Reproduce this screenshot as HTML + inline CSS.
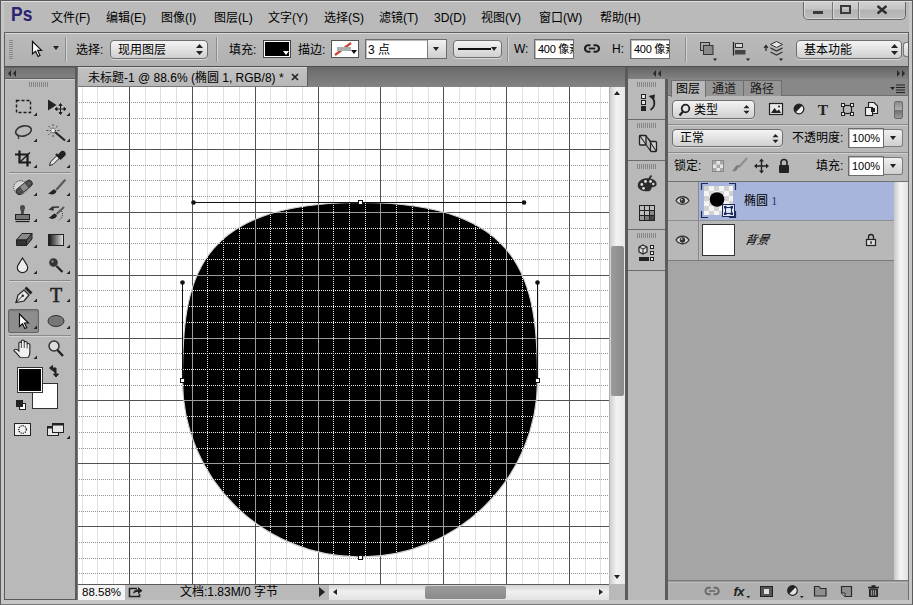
<!DOCTYPE html>
<html lang="zh-CN">
<head>
<meta charset="utf-8">
<title>Photoshop</title>
<style>
*{box-sizing:border-box}
html,body{margin:0;padding:0}
body{width:913px;height:605px;position:relative;overflow:hidden;background:#c4c4c4;font-family:"Liberation Sans","Noto Sans CJK SC",sans-serif;font-size:12px;color:#000;line-height:1}
.a{position:absolute}
.t{position:absolute;white-space:nowrap;line-height:14px;height:14px}
.sep{position:absolute;width:1px;background:#8d8d8d;box-shadow:1px 0 0 #d2d2d2}
.dd{position:absolute;border:1px solid #6f6f6f;border-radius:4px;background:linear-gradient(#f4f4f4,#d0d0d0);box-shadow:0 1px 0 #d8d8d8}
.inp{position:absolute;border:1px solid #6c6c6c;background:#fff;box-shadow:inset 1px 1px 0 #bdbdbd;overflow:hidden}
.hsep{position:absolute;height:1px;background:#8a8a8a;box-shadow:0 1px 0 #d0d0d0}
</style>
</head>
<body>
<!-- window frame -->
<div class="a" id="frame" style="left:0;top:0;width:913px;height:605px;background:#c6c6c6;border:1px solid #5a5a5a;border-bottom-color:#777"></div>
<div class="a" style="left:1px;top:1px;width:911px;height:1px;background:#e4e4e4"></div>

<!-- MENU BAR -->
<div class="a" id="menubar" style="left:4px;top:2px;width:905px;height:30px;background:#bababa"></div>
<div class="t" style="left:11px;top:2px;font-size:21px;font-weight:bold;color:#2d2272;line-height:24px;height:24px;transform:scaleX(0.83);transform-origin:0 0">Ps</div>
<div class="t" style="left:51px;top:11px">文件(F)</div>
<div class="t" style="left:106px;top:11px">编辑(E)</div>
<div class="t" style="left:161px;top:11px">图像(I)</div>
<div class="t" style="left:214px;top:11px">图层(L)</div>
<div class="t" style="left:268px;top:11px">文字(Y)</div>
<div class="t" style="left:324px;top:11px">选择(S)</div>
<div class="t" style="left:379px;top:11px">滤镜(T)</div>
<div class="t" style="left:434px;top:11px">3D(D)</div>
<div class="t" style="left:481px;top:11px">视图(V)</div>
<div class="t" style="left:539px;top:11px">窗口(W)</div>
<div class="t" style="left:600px;top:11px">帮助(H)</div>
<!-- window buttons -->
<div class="a" id="winbtns" style="left:803px;top:0;width:103px;height:20px;border:1px solid #666;border-top:none;border-radius:0 0 5px 5px;background:linear-gradient(#d4d4d4,#c6c6c6 45%,#b4b4b4 55%,#bcbcbc);box-shadow:inset 0 -1px 0 #d8d8d8,inset 1px 0 0 #dcdcdc">
  <div class="a" style="left:28px;top:0;width:1px;height:19px;background:#777;box-shadow:1px 0 0 #d8d8d8"></div>
  <div class="a" style="left:54px;top:0;width:1px;height:19px;background:#777;box-shadow:1px 0 0 #d8d8d8"></div>
  <div class="a" style="left:9px;top:11px;width:10px;height:3px;background:#3a3a3a"></div>
  <div class="a" style="left:36px;top:5px;width:11px;height:9px;border:2px solid #3a3a3a"></div>
  <svg class="a" style="left:72px;top:4px" width="12" height="11" viewBox="0 0 12 11"><path d="M1.5 2 L10.5 9.500 M10.5 2 L1.5 9.500" stroke="#2e2e2e" stroke-width="2.3"/></svg>
</div>

<div class="a" style="left:0;top:0;width:913px;height:1px;background:#5a5a5a"></div>
<div class="a" style="left:1px;top:1px;width:911px;height:1px;background:#e0e0e0"></div>
<!-- OPTIONS BAR -->
<div class="a" id="optbar" style="left:4px;top:32px;width:905px;height:35px;background:linear-gradient(#bbbbbb,#b0b0b0);border:1px solid #5e5e5e;border-bottom-color:#4f4f4f;box-shadow:inset 0 1px 0 #dadada"></div>


<!-- options content -->
<div class="a" style="left:9px;top:40px;width:4px;height:19px;background:repeating-linear-gradient(#8a8a8a 0 1px,transparent 1px 2px)"></div>
<svg class="a" style="left:31px;top:40px" width="12" height="18" viewBox="0 0 12 18"><path d="M1.5 1.5 L1.5 14 L4.6 11.2 L7 16.4 L9 15.5 L6.7 10.4 L10.6 10.4 Z" fill="#fff" stroke="#111" stroke-width="1.2" stroke-linejoin="miter"/></svg>
<div class="a" style="left:53px;top:46px;width:0;height:0;border-left:3.5px solid transparent;border-right:3.5px solid transparent;border-top:4px solid #222"></div>
<div class="sep" style="left:65px;top:37px;height:25px"></div>
<div class="t" style="left:76px;top:43px;font-size:12px">选择:</div>
<div class="dd" style="left:110px;top:40px;width:98px;height:19px"></div>
<div class="t" style="left:118px;top:43px;font-size:12px">现用图层</div>
<svg class="a" style="left:196px;top:44px" width="7" height="11" viewBox="0 0 7 11"><path d="M0 4 L3.5 0 L7 4 Z M0 7 L3.5 11 L7 7 Z" fill="#222"/></svg>
<div class="sep" style="left:216px;top:37px;height:25px"></div>
<div class="t" style="left:229px;top:43px;font-size:12px">填充:</div>
<div class="a" style="left:263px;top:40px;width:28px;height:18px;background:#000;border:1px solid #444;box-shadow:inset 0 0 0 1px #fff"></div>
<div class="a" style="left:283px;top:51px;width:0;height:0;border-left:3px solid transparent;border-right:3px solid transparent;border-top:4px solid #fff"></div>
<div class="t" style="left:298px;top:43px;font-size:12px">描边:</div>
<div class="a" style="left:331px;top:40px;width:28px;height:18px;background:#fff;border:1px solid #555"></div>
<svg class="a" style="left:332px;top:41px" width="26" height="16" viewBox="0 0 26 16"><path d="M3 14 L19 2" stroke="#d0453a" stroke-width="2.2"/><rect x="5" y="6" width="14" height="4" fill="#a9b0ad"/><path d="M19 9 L25 9 L22 13 Z" fill="#111"/></svg>
<div class="inp" style="left:365px;top:39px;width:82px;height:20px"></div>
<div class="t" style="left:368px;top:43px;font-size:12px">3 点</div>
<div class="a" style="left:427px;top:40px;width:19px;height:18px;background:linear-gradient(#f2f2f2,#cfcfcf);border-left:1px solid #7a7a7a"></div>
<div class="a" style="left:433px;top:47px;width:0;height:0;border-left:3.5px solid transparent;border-right:3.5px solid transparent;border-top:4px solid #222"></div>
<div class="dd" style="left:453px;top:40px;width:49px;height:18px"></div>
<div class="a" style="left:458px;top:48px;width:33px;height:2px;background:#111"></div>
<div class="a" style="left:491px;top:47px;width:0;height:0;border-left:3px solid transparent;border-right:3px solid transparent;border-top:4px solid #222"></div>
<div class="sep" style="left:507px;top:37px;height:25px"></div>
<div class="t" style="left:514px;top:42px">W:</div>
<div class="inp" style="left:534px;top:39px;width:40px;height:20px"><span class="t" style="left:3px;top:2px;font-size:11px;letter-spacing:-0.3px">400 像素</span></div>
<svg class="a" style="left:584px;top:43px" width="16" height="11" viewBox="0 0 16 11"><path d="M6.500 2.200 H4.300 a3.300 3.300 0 0 0 0 6.600 H6.500 M9.500 2.200 H11.700 a3.300 3.300 0 0 1 0 6.600 H9.500" fill="none" stroke="#1e1e1e" stroke-width="2.100"/><path d="M4.800 5.500 H11.200" stroke="#1e1e1e" stroke-width="1.800"/></svg>
<div class="t" style="left:612px;top:42px">H:</div>
<div class="inp" style="left:630px;top:39px;width:40px;height:20px"><span class="t" style="left:3px;top:2px;font-size:11px;letter-spacing:-0.3px">400 像素</span></div>
<div class="sep" style="left:685px;top:37px;height:25px"></div>
<!-- path ops -->
<svg class="a" style="left:699px;top:40px" width="20" height="22" viewBox="0 0 20 22"><rect x="1.500" y="2.500" width="9" height="8" fill="#a6a6a6" stroke="#333"/><rect x="4.500" y="5.500" width="9.500" height="9" fill="#8a8a8a" stroke="#333"/><path d="M14 18.500 L18 18.500 L16 21 Z" fill="#222"/></svg>
<svg class="a" style="left:731px;top:40px" width="22" height="22" viewBox="0 0 22 22"><path d="M2.500 2 L2.500 15.500" stroke="#222" stroke-width="1.300"/><rect x="4.500" y="3.500" width="7" height="4" fill="#d6d6d6" stroke="#333"/><rect x="4" y="10" width="10.500" height="4.500" fill="#444"/><path d="M15 18.500 L19 18.500 L17 21 Z" fill="#222"/></svg>
<svg class="a" style="left:760px;top:39px" width="26" height="24" viewBox="0 0 26 24"><path d="M6 6.500 L6 12 M4 9 L6 6.500 L8 9" stroke="#222" stroke-width="1.200" fill="none"/><path d="M16.500 2.500 L22.500 5.500 L16.500 8.500 L10.500 5.500 Z" fill="#e4e4e4" stroke="#333" stroke-width="1"/><path d="M10.500 8.300 L16.500 11.300 L22.500 8.300 L22.500 9.800 L16.500 12.800 L10.500 9.800 Z" fill="#333"/><path d="M10.500 13 L16.500 16 L22.500 13" fill="none" stroke="#333" stroke-width="1.300"/><path d="M19 19.500 L23 19.500 L21 22 Z" fill="#222"/></svg>
<div class="dd" style="left:796px;top:40px;width:106px;height:19px"></div>
<div class="t" style="left:804px;top:43px;font-size:12px">基本功能</div>
<svg class="a" style="left:891px;top:44px" width="7" height="11" viewBox="0 0 7 11"><path d="M0 4 L3.5 0 L7 4 Z M0 7 L3.5 11 L7 7 Z" fill="#222"/></svg>
<div class="a" style="left:903px;top:42px;width:5px;height:15px;background:linear-gradient(#f0f0f0,#d4d4d4);border:1px solid #7a7a7a;border-right:none;border-radius:3px 0 0 3px"></div>

<!-- TAB STRIP / dark band -->
<div class="a" id="tabstrip" style="left:4px;top:67px;width:905px;height:20px;background:linear-gradient(#6a6a6a,#848484)"></div>

<!-- TOOLBOX -->
<div class="a" id="toolbox" style="left:4px;top:67px;width:73px;height:533px;background:#b9b9b9;border:1px solid #5a5a5a;border-right:2px solid #5a5a5a"></div>


<!-- toolbox content -->
<div class="a" style="left:5px;top:67px;width:70px;height:12px;background:linear-gradient(#5e5e5e,#747474 15%,#808080);border-bottom:1px solid #5c5c5c"></div>
<div class="a" style="left:5px;top:79px;width:70px;height:1px;background:#cfcfcf"></div>
<svg class="a" style="left:7px;top:70px" width="10" height="7" viewBox="0 0 10 7"><path d="M4 0 L1 3.500 L4 7 Z M9 0 L6 3.500 L9 7 Z" fill="#2a2a2a"/></svg>
<div class="a" style="left:29px;top:82px;width:20px;height:5px;background:repeating-linear-gradient(90deg,#858585 0 1px,transparent 1px 2px)"></div>
<div class="hsep" style="left:9px;top:172px;width:62px"></div>
<div class="hsep" style="left:9px;top:280px;width:62px"></div>
<div class="hsep" style="left:9px;top:335px;width:62px"></div>
<div class="a" style="left:8px;top:309px;width:31px;height:24px;background:#8e8e8e;border:1px solid #666;border-radius:2px;box-shadow:inset 0 1px 2px #777"></div>
<svg class="a" id="tools" style="left:5px;top:90px" width="70" height="360" viewBox="5 90 70 360">
<!-- marquee -->
<rect x="16.500" y="100.500" width="14" height="12" fill="none" stroke="#1a1a1a" stroke-width="1.400" stroke-dasharray="3 2"/>
<path d="M37 112.5 V116 H33.5 Z" fill="#222"/>
<!-- move -->
<path d="M48 99.500 V110.500 L56.500 105 Z" fill="#222"/>
<path d="M60.500 104.500 V113.500 M56 109 H65 M60.500 103.500 L59 105.500 H62 Z M60.500 114.500 L59 112.500 H62 Z M55 109 L57 107.500 V110.500 Z M66 109 L64 107.500 V110.500 Z" stroke="#222" stroke-width="1" fill="#222"/>
<path d="M70 112.5 V116 H66.5 Z" fill="#222"/>
<!-- lasso -->
<ellipse cx="23.500" cy="131" rx="8" ry="5" transform="rotate(-14 23.500 131)" fill="none" stroke="#333" stroke-width="1.600"/>
<path d="M17.500 134 C16.500 135.500 19.500 136 18.500 139" fill="none" stroke="#333" stroke-width="1.300"/>
<path d="M37 138.5 V142 H33.5 Z" fill="#222"/>
<!-- wand -->
<path d="M55 132 L65 140.500" stroke="#222" stroke-width="2.200"/>
<path d="M53 124 V137 M46.500 130.500 H59.500 M48.500 126 L57.500 135 M57.500 126 L48.500 135" stroke="#444" stroke-width="1" stroke-dasharray="2 1.500 6 1.500"/>
<circle cx="53" cy="130.500" r="1.800" fill="#eee"/>
<path d="M70 138.5 V142 H66.5 Z" fill="#222"/>
<!-- crop -->
<path d="M19.500 150.500 V162.500 H31 M15 154.500 H27.500 V166.500" fill="none" stroke="#1a1a1a" stroke-width="2.200"/>
<path d="M19.500 162.500 L30 152.500" stroke="#1a1a1a" stroke-width="1.300"/>
<path d="M37 164.5 V168 H33.5 Z" fill="#222"/>
<!-- eyedropper -->
<path d="M49.500 165.500 L50.500 162 L57 155.500 L59.500 158 L53 164.500 Z" fill="#e8e8e8" stroke="#222" stroke-width="1"/>
<path d="M56 154 L61 159 M57.500 156.500 L62 152 a2 2 0 0 1 2.500 2.500 L60 159" stroke="#222" stroke-width="2.400" fill="#222"/>
<path d="M70 164.5 V168 H66.5 Z" fill="#222"/>
<!-- healing -->
<circle cx="20.500" cy="187.500" r="6.800" fill="#d6d6d6" stroke="#222" stroke-width="1" stroke-dasharray="1 1.200"/>
<g transform="rotate(-39 24.200 187.400)"><rect x="14.700" y="184.100" width="19" height="6.600" rx="3.300" fill="#4a4a4a" stroke="#222" stroke-width="0.800"/><rect x="21.200" y="184.600" width="6" height="5.600" fill="#8e8e8e"/><path d="M17 187.400 h2.500 M29 187.400 h2.500" stroke="#999" stroke-width="0.800" stroke-dasharray="0.800 0.800"/></g>
<path d="M37 192.5 V196 H33.5 Z" fill="#222"/>
<!-- brush -->
<path d="M64.800 180.300 L56.800 189.300" stroke="#5a5a5a" stroke-width="2.200" stroke-linecap="round"/>
<path d="M47.800 193.300 C50.500 192.800 51.500 190.300 54.300 189.200 L56.500 191.200 C56 193.500 52.500 195.800 47.800 193.300 Z" fill="#222"/>
<path d="M70 192.5 V196 H66.5 Z" fill="#222"/>
<!-- stamp -->
<path d="M20 207.500 a2.500 2.500 0 0 1 5 0 c0 2 -1.300 3 -1.100 7 H21.100 c0.200 -4 -1.100 -5 -1.100 -7 Z" fill="#4a4a4a"/>
<rect x="15.500" y="214.500" width="14" height="5" fill="#777" stroke="#222" stroke-width="1"/>
<path d="M15.500 221.500 H29.500" stroke="#222" stroke-width="1.300"/>
<path d="M37 218.5 V222 H33.5 Z" fill="#222"/>
<!-- history brush -->
<path d="M63.500 207.500 L57.200 213.500" stroke="#5a5a5a" stroke-width="2" stroke-linecap="round"/>
<path d="M48.500 217.800 C51 217.300 52 214.800 54.800 213.600 L57 215.600 C56.500 218 53 220.300 48.500 217.800 Z" fill="#222"/>
<path d="M52 208.300 C54.500 207 57 206.800 59 207.300" fill="none" stroke="#333" stroke-width="1.600"/><path d="M48.300 209.800 L53.300 205.800 L53.800 210.800 Z" fill="#333"/>
<path d="M61.500 211 C63.500 214 62.500 218.500 58.500 220.500" fill="none" stroke="#333" stroke-width="1" stroke-dasharray="1 1.200"/>
<path d="M70 218.5 V222 H66.5 Z" fill="#222"/>
<!-- eraser -->
<path d="M16.500 240 L22 233.500 H32 L26.500 240 Z" fill="#8a8a8a" stroke="#222" stroke-width="1"/>
<path d="M16.500 240 H26.500 V245.500 H16.500 Z" fill="#333" stroke="#222" stroke-width="1"/>
<path d="M26.500 240 L32 233.500 V239 L26.500 245.500 Z" fill="#555" stroke="#222" stroke-width="1"/>
<path d="M37 244.5 V248 H33.5 Z" fill="#222"/>
<!-- gradient -->
<defs><linearGradient id="gr" x1="0" x2="1"><stop offset="0" stop-color="#111"/><stop offset="1" stop-color="#e6e6e6"/></linearGradient></defs>
<rect x="48.500" y="234.500" width="15" height="11" fill="url(#gr)" stroke="#222" stroke-width="1"/>
<path d="M70 244.5 V248 H66.5 Z" fill="#222"/>
<!-- blur drop -->
<path d="M22.500 258 C19.500 263 17.300 265 17.300 267.500 a5.200 5.200 0 0 0 10.400 0 C27.700 265 25.500 263 22.500 258 Z" fill="#ececec" stroke="#222" stroke-width="1.200"/>
<path d="M37 270.5 V274 H33.5 Z" fill="#222"/>
<!-- dodge -->
<circle cx="53.500" cy="262.500" r="4.300" fill="#333"/><path d="M56.500 266 L62.500 272" stroke="#222" stroke-width="2.200"/>
<circle cx="52.500" cy="261.500" r="1.200" fill="#888"/>
<path d="M70 270.5 V274 H66.5 Z" fill="#222"/>
<!-- pen -->
<path d="M16 302.500 L18 295 L24 290 L29 295 L24 301 Z" fill="#e6e6e6" stroke="#222" stroke-width="1.200"/>
<path d="M16 302.500 L22.500 296" stroke="#222" stroke-width="1"/><circle cx="22.800" cy="295.700" r="1.200" fill="#222"/>
<path d="M24.500 288.500 L30.500 294.500 L32.500 292.500 L26.500 286.500 Z" fill="#222"/>
<path d="M37 298.5 V302 H33.5 Z" fill="#222"/>
<!-- T -->
<text x="56" y="301.500" font-family="Liberation Serif,serif" font-size="20" text-anchor="middle" fill="#222" stroke="#222" stroke-width="0.500">T</text>
<path d="M70 298.5 V302 H66.5 Z" fill="#222"/>
<!-- path selection (selected) -->
<path d="M19.500 314 V326.500 L22.500 323.800 L24.800 328.500 L26.700 327.600 L24.500 323 L28.300 323 Z" fill="#fff" stroke="#111" stroke-width="1.200"/>
<path d="M37 325.5 V329 H33.5 Z" fill="#222"/>
<!-- ellipse shape -->
<ellipse cx="56" cy="321" rx="8" ry="5.500" fill="#777" stroke="#333" stroke-width="1"/>
<path d="M70 325.5 V329 H66.5 Z" fill="#222"/>
<!-- hand -->
<g transform="translate(22 349.500) scale(1.25 1.05) translate(-20.500 -349.500)"><path d="M19 357 C17 354 15 351.500 14 350.500 C14.500 348.500 16.500 349 18 351 V343.500 C18 342 20 342 20 343.500 V341.500 C20 340 22.300 340 22.300 341.500 V343 C22.300 341.500 24.600 341.500 24.600 343 V345 C24.600 343.500 26.800 343.500 26.800 345 V352 C26.800 354.500 26 356 25.500 357 Z" fill="#f0f0f0" stroke="#222" stroke-width="0.900"/><path d="M20 343.500 V348 M22.300 343 V348 M24.600 345 V348.500" stroke="#222" stroke-width="0.700"/></g>
<path d="M37 355.5 V359 H33.5 Z" fill="#222"/>
<!-- zoom -->
<circle cx="54" cy="346" r="5" fill="#ddd" stroke="#333" stroke-width="1.500"/><path d="M57.500 350 L63 356" stroke="#222" stroke-width="2.400"/>
<!-- swap arrow -->
<path d="M51 368 H56 V375 M49.500 368 L52.500 365.500 V370.500 Z M56 377 L53.500 374 H58.500 Z" fill="#222" stroke="#222" stroke-width="1"/>
<!-- bg swatch -->
<rect x="32.500" y="383.500" width="25" height="25" fill="#fff" stroke="#333" stroke-width="1"/>
<!-- fg swatch -->
<rect x="18.500" y="368.500" width="23" height="23" fill="#000" stroke="#fff" stroke-width="1"/>
<rect x="17.500" y="367.500" width="25" height="25" fill="none" stroke="#333" stroke-width="1"/>
<!-- default colors -->
<rect x="19.500" y="403.500" width="6" height="6" fill="#fff" stroke="#222" stroke-width="1"/>
<rect x="16.500" y="400.500" width="6" height="6" fill="#222" stroke="#222" stroke-width="1"/>
<!-- quickmask -->
<rect x="14.500" y="423.500" width="16" height="12" fill="#f2f2f2" stroke="#222" stroke-width="1"/>
<circle cx="22.500" cy="429.500" r="3.800" fill="none" stroke="#111" stroke-width="1.200" stroke-dasharray="1.200 1"/>
<!-- screen mode -->
<rect x="47.500" y="426.500" width="11" height="9" fill="#e6e6e6" stroke="#222" stroke-width="1"/><path d="M47 427.500 H59" stroke="#222" stroke-width="2"/>
<rect x="52.500" y="423.500" width="11" height="9" fill="#e6e6e6" stroke="#222" stroke-width="1"/><path d="M52 424.500 H64" stroke="#222" stroke-width="2"/>
<path d="M70 435.5 V439 H66.5 Z" fill="#222"/>
</svg>

<!-- DOCUMENT -->
<div class="a" id="doc" style="left:77px;top:87px;width:549px;height:513px;background:#fff"></div>


<!-- doc tab -->
<div class="a" id="doctab" style="left:78px;top:67px;width:230px;height:20px;background:linear-gradient(#c2c2c2,#b7b7b7);border-right:1px solid #5c5c5c;border-bottom:1px solid #777;box-shadow:inset 0 1px 0 #d4d4d4"></div>
<div class="t" style="left:88px;top:71px;font-size:12px">未标题-1 @ 88.6% (椭圆 1, RGB/8) *</div>
<svg class="a" style="left:291px;top:73px" width="8" height="8" viewBox="0 0 8 8"><path d="M1 1 L7 7 M7 1 L1 7" stroke="#222" stroke-width="1.6"/></svg>
<svg class="a" id="canvas" style="left:77px;top:87px" width="532" height="497" viewBox="77 87 532 497" shape-rendering="crispEdges">
<defs><clipPath id="shp"><path d="M360.500 202.500 C524 202.500 537.500 282 537.500 380 C537.500 478 458 557 360.500 557 C262 557 182.500 478 182.500 380 C182.500 282 193.500 202.500 360.500 202.500 Z"/></clipPath></defs>
<rect x="77" y="87" width="532" height="497" fill="#fff"/>
<path d="M82.5 87V584M97.5 87V584M113.5 87V584M145.5 87V584M160.5 87V584M176.5 87V584M207.5 87V584M223.5 87V584M239.5 87V584M270.5 87V584M286.5 87V584M302.5 87V584M333.5 87V584M349.5 87V584M365.5 87V584M396.5 87V584M412.5 87V584M428.5 87V584M459.5 87V584M475.5 87V584M490.5 87V584M522.5 87V584M538.5 87V584M553.5 87V584M585.5 87V584M600.5 87V584" stroke="#e0e0e0" stroke-width="1" fill="none"/>
<path d="M77 102.5H609M77 118.5H609M77 133.5H609M77 165.5H609M77 180.5H609M77 196.5H609M77 228.5H609M77 243.5H609M77 259.5H609M77 290.5H609M77 306.5H609M77 322.5H609M77 353.5H609M77 369.5H609M77 385.5H609M77 416.5H609M77 432.5H609M77 448.5H609M77 479.5H609M77 495.5H609M77 511.5H609M77 542.5H609M77 558.5H609M77 573.5H609" stroke="#969696" stroke-width="1" stroke-dasharray="1 1" fill="none"/>
<path d="M129.5 87V584M192.5 87V584M255.5 87V584M318.5 87V584M380.5 87V584M443.5 87V584M506.5 87V584M569.5 87V584M77 149.5H609M77 212.5H609M77 275.5H609M77 338.5H609M77 400.5H609M77 463.5H609M77 526.5H609" stroke="#525252" stroke-width="1" fill="none"/>
<g clip-path="url(#shp)">
<rect x="77" y="87" width="532" height="497" fill="#000"/>
<path d="M82.5 87V584M97.5 87V584M113.5 87V584M145.5 87V584M160.5 87V584M176.5 87V584M207.5 87V584M223.5 87V584M239.5 87V584M270.5 87V584M286.5 87V584M302.5 87V584M333.5 87V584M349.5 87V584M365.5 87V584M396.5 87V584M412.5 87V584M428.5 87V584M459.5 87V584M475.5 87V584M490.5 87V584M522.5 87V584M538.5 87V584M553.5 87V584M585.5 87V584M600.5 87V584M77 102.5H609M77 118.5H609M77 133.5H609M77 165.5H609M77 180.5H609M77 196.5H609M77 228.5H609M77 243.5H609M77 259.5H609M77 290.5H609M77 306.5H609M77 322.5H609M77 353.5H609M77 369.5H609M77 385.5H609M77 416.5H609M77 432.5H609M77 448.5H609M77 479.5H609M77 495.5H609M77 511.5H609M77 542.5H609M77 558.5H609M77 573.5H609" stroke="#e8e8e8" stroke-width="1" stroke-dasharray="1 1" fill="none"/>
<path d="M129.5 87V584M192.5 87V584M255.5 87V584M318.5 87V584M380.5 87V584M443.5 87V584M506.5 87V584M569.5 87V584M77 149.5H609M77 212.5H609M77 275.5H609M77 338.5H609M77 400.5H609M77 463.5H609M77 526.5H609" stroke="#9c9c9c" stroke-width="1" fill="none"/>
</g>
</svg>
<svg class="a" id="pathov" style="left:77px;top:87px" width="532" height="497" viewBox="77 87 532 497">
<path d="M360.500 202.500 C524 202.500 537.500 282 537.500 380 C537.500 478 458 557 360.500 557 C262 557 182.500 478 182.500 380 C182.500 282 193.500 202.500 360.500 202.500 Z" fill="none" stroke="#d4d4d4" stroke-width="1.1"/>
<path d="M193.500 202.500 H524 M182.500 282.500 V380 M537.500 282.500 V380" stroke="#111" stroke-width="1" shape-rendering="crispEdges"/>
<circle cx="193.5" cy="202.5" r="2.3" fill="#111"/>
<circle cx="524" cy="202.5" r="2.3" fill="#111"/>
<circle cx="182.5" cy="282.5" r="2.3" fill="#111"/>
<circle cx="537.5" cy="282.5" r="2.3" fill="#111"/>
<rect x="358.5" y="200.5" width="4" height="4" fill="#fff" stroke="#111" stroke-width="1" shape-rendering="crispEdges"/>
<rect x="180.5" y="378.5" width="4" height="4" fill="#fff" stroke="#111" stroke-width="1" shape-rendering="crispEdges"/>
<rect x="535.5" y="378.5" width="4" height="4" fill="#fff" stroke="#111" stroke-width="1" shape-rendering="crispEdges"/>
<rect x="358.5" y="555.5" width="4" height="4" fill="#fff" stroke="#111" stroke-width="1" shape-rendering="crispEdges"/>
</svg>
<!-- v scrollbar -->
<div class="a" id="vsb" style="left:609px;top:87px;width:17px;height:497px;background:linear-gradient(90deg,#d0d0d0,#f2f2f2 40%,#e6e6e6);border-left:1px solid #b0b0b0"></div>
<div class="a" style="left:614px;top:91px;width:0;height:0;border-left:3.5px solid transparent;border-right:3.5px solid transparent;border-bottom:4px solid #222"></div>
<div class="a" style="left:614px;top:575px;width:0;height:0;border-left:3.5px solid transparent;border-right:3.5px solid transparent;border-top:4px solid #222"></div>
<div class="a" style="left:611px;top:246px;width:13px;height:150px;background:linear-gradient(90deg,#9b9b9b,#8a8a8a);border-radius:2px"></div>
<!-- status bar -->
<div class="a" id="status" style="left:77px;top:584px;width:549px;height:16px;background:#b9b9b9;border-top:1px solid #5a5a5a"></div>
<div class="a" style="left:77px;top:87px;width:1px;height:513px;background:#7a7a7a"></div>
<div class="a" style="left:78px;top:585px;width:47px;height:15px;background:#f4f4f4"></div>
<div class="t" style="left:82px;top:585px;font-size:11.5px">88.58%</div>
<svg class="a" style="left:128px;top:586px" width="15" height="12" viewBox="0 0 15 12"><path d="M9 2.500 H1.500 V10.500 H11.500 V8" fill="none" stroke="#222" stroke-width="1.6"/><path d="M5 8 C5 5 7 3.500 10 3.500 V1 L14.500 4.700 L10 8.300 V6 C8 6 6.500 6.500 5 8 Z" fill="#222"/></svg>
<div class="t" style="left:180px;top:585px;font-size:12px">文档:1.83M/0 字节</div>
<div class="a" style="left:319px;top:587px;width:0;height:0;border-top:5px solid transparent;border-bottom:5px solid transparent;border-left:6px solid #222"></div>
<div class="a" id="hsb" style="left:329px;top:585px;width:280px;height:15px;background:linear-gradient(#d4d4d4,#f0f0f0 45%,#e2e2e2)"></div>
<div class="a" style="left:333px;top:589px;width:0;height:0;border-top:3.5px solid transparent;border-bottom:3.5px solid transparent;border-right:4px solid #222"></div>
<div class="a" style="left:599px;top:589px;width:0;height:0;border-top:3.5px solid transparent;border-bottom:3.5px solid transparent;border-left:4px solid #222"></div>
<div class="a" style="left:425px;top:586px;width:81px;height:13px;background:linear-gradient(#9b9b9b,#8a8a8a);border-radius:2px"></div>
<div class="a" style="left:609px;top:584px;width:17px;height:16px;background:#b9b9b9"></div>

<!-- RIGHT DOCK -->
<div class="a" id="dock" style="left:626px;top:67px;width:283px;height:533px;background:#6e6e6e"></div>


<!-- dock header -->
<div class="a" style="left:625px;top:67px;width:3px;height:533px;background:#5a5a5a"></div>
<div class="a" style="left:628px;top:67px;width:280px;height:12px;background:linear-gradient(#656565,#828282)"></div>
<svg class="a" style="left:652px;top:70px" width="10" height="7" viewBox="0 0 10 7"><path d="M4 0 L1 3.500 L4 7 Z M9 0 L6 3.500 L9 7 Z" fill="#2a2a2a"/></svg>
<svg class="a" style="left:896px;top:70px" width="10" height="7" viewBox="0 0 10 7"><path d="M1 0 L4 3.500 L1 7 Z M6 0 L9 3.500 L6 7 Z" fill="#2a2a2a"/></svg>
<!-- icon column -->
<div class="a" id="iconcol" style="left:628px;top:79px;width:37px;height:521px;background:#b9b9b9"></div>
<div class="a" style="left:637px;top:82px;width:20px;height:5px;background:repeating-linear-gradient(90deg,#858585 0 1px,transparent 1px 2px)"></div><div class="a" style="left:637px;top:123px;width:20px;height:5px;background:repeating-linear-gradient(90deg,#858585 0 1px,transparent 1px 2px)"></div><div class="a" style="left:637px;top:164px;width:20px;height:5px;background:repeating-linear-gradient(90deg,#858585 0 1px,transparent 1px 2px)"></div><div class="a" style="left:637px;top:233px;width:20px;height:5px;background:repeating-linear-gradient(90deg,#858585 0 1px,transparent 1px 2px)"></div>
<div class="a" style="left:628px;top:119px;width:37px;height:1px;background:#6a6a6a"></div>
<div class="a" style="left:628px;top:160px;width:37px;height:1px;background:#6a6a6a"></div>
<div class="a" style="left:628px;top:229px;width:37px;height:1px;background:#6a6a6a"></div>
<div class="a" style="left:628px;top:270px;width:37px;height:1px;background:#6a6a6a"></div>
<svg class="a" style="left:628px;top:79px" width="37" height="200" viewBox="628 79 37 200">
<!-- history -->
<rect x="641.500" y="94.500" width="4" height="4" fill="#e4e4e4" stroke="#222"/><rect x="641.500" y="100.500" width="4" height="4" fill="#e4e4e4" stroke="#222"/><rect x="641" y="106" width="5" height="5" fill="#222"/>
<path d="M650.500 110 C654.500 107.500 656 102.500 652.500 97.500" fill="none" stroke="#222" stroke-width="1.800"/><path d="M648.500 96 L655 94.500 L654 100.500 Z" fill="#222"/>
<!-- properties-ish -->
<rect x="639.500" y="135.500" width="6.500" height="9.500" rx="0.800" fill="#cfcfcf" stroke="#222" stroke-width="1.300"/>
<rect x="650.500" y="141.500" width="6" height="10" rx="1" fill="#cfcfcf" stroke="#222" stroke-width="1.300"/>
<path d="M640 136 L650.500 151 M646 135.500 L656 151 M646 136 L651 141.500" stroke="#222" stroke-width="1.100" fill="none"/>
<!-- palette -->
<path d="M637.800 185.500 C637.800 181 642 178.300 647.500 178.300 C653 178.300 656.600 180.800 656.600 184 C656.600 187 653.500 186.500 652 187.500 C650.500 188.500 652 191.300 647.500 191.300 C641.500 191.300 637.800 189 637.800 185.500 Z" fill="#2c2c2c"/>
<circle cx="641.800" cy="184.500" r="1.400" fill="#ddd"/><circle cx="645.500" cy="181.500" r="1.400" fill="#ddd"/><circle cx="650.500" cy="181.500" r="1.400" fill="#ddd"/><circle cx="643.500" cy="188.300" r="1.400" fill="#ddd"/><circle cx="653.300" cy="184" r="1.200" fill="#ddd"/><path d="M649 179 L651.500 175.500" stroke="#2c2c2c" stroke-width="1.800"/>
<!-- swatches -->
<rect x="639.500" y="205.500" width="15" height="15" fill="#bdbdbd" stroke="#222"/><rect x="650" y="216" width="4" height="4" fill="#444"/><rect x="645" y="216" width="4" height="4" fill="#777"/><rect x="650" y="211" width="4" height="4" fill="#888"/><rect x="640" y="216" width="4" height="4" fill="#999"/><path d="M644.500 205.500 V220.500 M649.500 205.500 V220.500 M639.500 210.500 H654.500 M639.500 215.500 H654.500" stroke="#222" stroke-width="1"/>
<!-- 3d / tool presets -->
<path d="M643 245 L647 247 V252 L643 254 L639 252 V247 Z" fill="#ddd" stroke="#222" stroke-width="1.200"/><path d="M639 247 L643 249 L647 247 M643 249 V254" stroke="#222" stroke-width="1" fill="none"/>
<rect x="650.500" y="245.500" width="3" height="3" fill="#eee" stroke="#222"/><rect x="650.500" y="251.500" width="3" height="3" fill="#eee" stroke="#222"/>
<rect x="639" y="257" width="10" height="4" fill="#222"/><rect x="650.500" y="257.500" width="3" height="3" fill="#eee" stroke="#222"/>
</svg>
<div class="a" style="left:665px;top:79px;width:3px;height:521px;background:#5c5c5c"></div>
<!-- layers panel -->
<div class="a" id="laypanel" style="left:668px;top:79px;width:240px;height:521px;background:#b8b8b8"></div>
<div class="a" style="left:668px;top:79px;width:240px;height:17px;background:#888;border-bottom:1px solid #6e6e6e"></div>
<div class="a" style="left:671px;top:80px;width:35px;height:17px;background:#b8b8b8;border:1px solid #6e6e6e;border-bottom:none"></div>
<div class="a" style="left:706px;top:80px;width:38px;height:16px;background:#969696;border:1px solid #6c6c6c;border-left:none;border-bottom:none"></div>
<div class="a" style="left:744px;top:80px;width:38px;height:16px;background:#969696;border:1px solid #6c6c6c;border-left:none;border-bottom:none"></div>
<div class="t" style="left:676px;top:82px;font-size:12px">图层</div>
<div class="t" style="left:712px;top:82px;font-size:12px;color:#1a1a1a">通道</div>
<div class="t" style="left:750px;top:82px;font-size:12px;color:#1a1a1a">路径</div>
<svg class="a" style="left:890px;top:84px" width="16" height="9" viewBox="0 0 16 9"><path d="M0 3 H5 L2.500 6 Z" fill="#222"/><path d="M6 1 H15 M6 3.500 H15 M6 6 H15 M6 8.500 H15" stroke="#222" stroke-width="1.100"/></svg>
<!-- filter row -->
<div class="dd" style="left:672px;top:100px;width:83px;height:19px"></div>
<svg class="a" style="left:678px;top:103px" width="13" height="14" viewBox="0 0 13 14"><circle cx="7.500" cy="5.500" r="3.800" fill="none" stroke="#222" stroke-width="1.800"/><path d="M5 8.500 L1.500 12.500" stroke="#222" stroke-width="2.200"/></svg>
<div class="t" style="left:694px;top:103px;font-size:12px">类型</div>
<svg class="a" style="left:743px;top:104px" width="7" height="11" viewBox="0 0 7 11"><path d="M0.500 4.300 L3.500 1 L6.500 4.300 Z M0.500 6.700 L3.500 10 L6.500 6.700 Z" fill="#222"/></svg>
<svg class="a" style="left:768px;top:100px" width="115" height="20" viewBox="768 100 115 20">
<rect x="769.500" y="103.500" width="13" height="11" fill="#e8e8e8" stroke="#222" stroke-width="1.200"/><path d="M771 113 L774.500 108 L777 111 L779 109.500 L781 113 Z" fill="#222"/><circle cx="779" cy="106.500" r="1" fill="#222"/>
<circle cx="799" cy="109" r="4.800" fill="#eee" stroke="#222" stroke-width="1.300"/><path d="M802.400 105.600 A4.800 4.800 0 0 0 795.600 112.400 Z" fill="#222"/>
<text x="823" y="114.500" font-family="Liberation Serif,serif" font-weight="bold" font-size="15.500" text-anchor="middle" fill="#222">T</text>
<rect x="843.500" y="105.500" width="8" height="8" fill="none" stroke="#222" stroke-width="1.200"/><rect x="841.500" y="103.500" width="3" height="3" fill="#eee" stroke="#222"/><rect x="850.500" y="103.500" width="3" height="3" fill="#eee" stroke="#222"/><rect x="841.500" y="112.500" width="3" height="3" fill="#eee" stroke="#222"/><rect x="850.500" y="112.500" width="3" height="3" fill="#eee" stroke="#222"/>
<path d="M868.500 102.500 H874 L877.500 106 V113.500 H868.500 Z" fill="#eee" stroke="#222" stroke-width="1.100"/><rect x="865.500" y="107.500" width="7" height="8" fill="#eee" stroke="#222" stroke-width="1.100"/><rect x="871" y="108" width="4" height="4" fill="#222"/>
</svg>
<div class="a" style="left:894px;top:101px;width:9px;height:18px;border:1px solid #6a6a6a;border-radius:2px;background:linear-gradient(#8c8c8c,#b0b0b0 48%,#6f6f6f 52%,#9a9a9a)"></div>
<div class="hsep" style="left:668px;top:124px;width:240px"></div>
<!-- blend row -->
<div class="dd" style="left:672px;top:129px;width:111px;height:18px"></div>
<div class="t" style="left:680px;top:131px;font-size:12px">正常</div>
<svg class="a" style="left:772px;top:133px" width="7" height="11" viewBox="0 0 7 11"><path d="M0.500 4.300 L3.500 1 L6.500 4.300 Z M0.500 6.700 L3.500 10 L6.500 6.700 Z" fill="#222"/></svg>
<div class="t" style="left:792px;top:131px;font-size:12px">不透明度:</div>
<div class="inp" style="left:848px;top:128px;width:36px;height:20px"><span class="t" style="left:3px;top:2px;font-size:11px">100%</span></div>
<div class="a" style="left:884px;top:129px;width:19px;height:18px;border:1px solid #7a7a7a;border-left:none;border-radius:0 3px 3px 0;background:linear-gradient(#f0f0f0,#cfcfcf)"></div>
<div class="a" style="left:890px;top:136px;width:0;height:0;border-left:3.5px solid transparent;border-right:3.5px solid transparent;border-top:4px solid #222"></div>
<div class="hsep" style="left:668px;top:152px;width:240px"></div>
<!-- lock row -->
<div class="t" style="left:674px;top:159px;font-size:12px">锁定:</div>
<svg class="a" style="left:710px;top:156px" width="85" height="20" viewBox="710 156 85 20">
<rect x="712.500" y="160.500" width="11" height="11" fill="#e6e6e6" stroke="#8a8a8a"/><path d="M713 161 h3.500 v3.500 h-3.500 Z M720 161 h3 v3.500 h-3 Z M716.500 164.500 h3.500 v3.500 h-3.500 Z M713 168 h3.500 v3 h-3.500 Z M720 168 h3 v3 h-3 Z" fill="#a8a8a8"/>
<path d="M747 158 L739 167" stroke="#8e8e8e" stroke-width="2"/><path d="M740 165 L737.500 169 C736 171.500 733.500 171.500 732 171 C734 170 734 167.500 736.500 165.500 Z" fill="#7c7c7c"/>
<path d="M761.500 160.500 V171.500 M756 166 H767" stroke="#222" stroke-width="1.400"/><path d="M761.500 158.500 L759 161.500 H764 Z M761.500 173.500 L759 170.500 H764 Z M754 166 L757 163.500 V168.500 Z M769 166 L766 163.500 V168.500 Z" fill="#222"/>
<rect x="779" y="165" width="10" height="8" rx="1" fill="#222"/><path d="M781 165 V162.500 a3 3 0 0 1 6 0 V165" fill="none" stroke="#222" stroke-width="1.600"/>
</svg>
<div class="t" style="left:816px;top:159px;font-size:12px">填充:</div>
<div class="inp" style="left:848px;top:156px;width:36px;height:20px"><span class="t" style="left:3px;top:2px;font-size:11px">100%</span></div>
<div class="a" style="left:884px;top:157px;width:19px;height:18px;border:1px solid #7a7a7a;border-left:none;border-radius:0 3px 3px 0;background:linear-gradient(#f0f0f0,#cfcfcf)"></div>
<div class="a" style="left:890px;top:164px;width:0;height:0;border-left:3.5px solid transparent;border-right:3.5px solid transparent;border-top:4px solid #222"></div>
<div class="a" style="left:668px;top:181px;width:240px;height:1px;background:#707070"></div>
<!-- layer rows -->
<div class="a" style="left:699px;top:182px;width:195px;height:38px;background:#a7b5dd"></div>
<div class="a" style="left:668px;top:220px;width:226px;height:1px;background:#8f8f8f"></div>
<div class="a" style="left:698px;top:182px;width:1px;height:78px;background:#8a8a8a"></div>
<div class="a" style="left:668px;top:260px;width:226px;height:1px;background:#7a7a7a"></div>
<div class="a" style="left:668px;top:261px;width:226px;height:319px;background:#a5a5a5"></div>
<div class="a" style="left:894px;top:182px;width:14px;height:398px;background:linear-gradient(90deg,#c8c8c8,#f4f4f4 45%,#e2e2e2)"></div>
<svg class="a" style="left:668px;top:182px" width="226" height="78" viewBox="668 182 226 78">
<g transform="translate(682.5 200.5)"><path d="M-6.500 0 C-3.500 -5 3.500 -5 6.500 0 C3.500 5 -3.500 5 -6.500 0 Z" fill="#d8d8d8" stroke="#333" stroke-width="1.300"/><circle cx="0" cy="0" r="2.700" fill="#333"/><circle cx="-0.800" cy="-0.900" r="0.900" fill="#ccc"/></g><g transform="translate(682.5 240)"><path d="M-6.500 0 C-3.500 -5 3.500 -5 6.500 0 C3.500 5 -3.500 5 -6.500 0 Z" fill="#d8d8d8" stroke="#333" stroke-width="1.300"/><circle cx="0" cy="0" r="2.700" fill="#333"/><circle cx="-0.800" cy="-0.900" r="0.900" fill="#ccc"/></g>
<path d="M701.500 190 V183.500 H708 M729 183.500 H735.500 V190 M735.500 211 V217.500 H729 M708 217.500 H701.500 V211" fill="none" stroke="#1c2a5a" stroke-width="1.200"/>
<rect x="704" y="186" width="29" height="29" fill="#f4f4f4"/>
<path d="M704 186 h5 v5 h-5 Z M714 186 h5 v5 h-5 Z M724 186 h5 v5 h-5 Z M709 191 h5 v5 h-5 Z M719 191 h5 v5 h-5 Z M729 191 h4 v5 h-4 Z M704 196 h5 v5 h-5 Z M714 196 h5 v5 h-5 Z M724 196 h5 v5 h-5 Z M709 201 h5 v5 h-5 Z M719 201 h5 v5 h-5 Z M729 201 h4 v5 h-4 Z M704 206 h5 v5 h-5 Z M714 206 h5 v5 h-5 Z M724 206 h5 v5 h-5 Z M709 211 h5 v4 h-5 Z M719 211 h5 v4 h-5 Z M729 211 h4 v4 h-4 Z" fill="#d2d2d2"/>
<circle cx="717" cy="199.500" r="7.300" fill="#000"/>
<rect x="722.500" y="204.500" width="12" height="12" fill="#dfe5f3" stroke="#1c2a5a" stroke-width="1"/>
<rect x="725.500" y="207.500" width="6" height="6" fill="none" stroke="#1c2a5a" stroke-width="1"/>
<rect x="724" y="206" width="2.500" height="2.500" fill="#1c2a5a"/><rect x="730.500" y="206" width="2.500" height="2.500" fill="#1c2a5a"/><rect x="724" y="212.500" width="2.500" height="2.500" fill="#1c2a5a"/><rect x="730.500" y="212.500" width="2.500" height="2.500" fill="#1c2a5a"/>
<rect x="702.500" y="224.500" width="32" height="31" fill="#fff" stroke="#333" stroke-width="1"/>
<rect x="866.500" y="239.500" width="9" height="6" fill="#ddd" stroke="#222" stroke-width="1.200"/><path d="M868.500 239.500 V237 a2.500 2.500 0 0 1 5 0 V239.500" fill="none" stroke="#222" stroke-width="1.300"/><rect x="870.300" y="241.300" width="1.500" height="2.500" fill="#222"/>
</svg>
<div class="t" style="left:744px;top:194px;font-size:12px">椭圆 <span style="color:#26356e;font-family:'Liberation Serif',serif">1</span></div>
<div class="t" style="left:745px;top:233px;font-size:12px;font-style:italic;transform:skewX(-12deg)">背景</div>
<!-- bottom bar -->
<div class="a" style="left:668px;top:580px;width:240px;height:20px;background:#b0b0b0;border-top:1px solid #7c7c7c;box-shadow:inset 0 1px 0 #9a9a9a,inset 0 2px 0 #bcbcbc"></div>
<svg class="a" style="left:700px;top:581px" width="190" height="19" viewBox="700 581 190 19">
<g transform="translate(704.500 585.500) scale(0.95 1)"><path d="M6.500 2.200 H4.300 a3.300 3.300 0 0 0 0 6.600 H6.500 M9.500 2.200 H11.700 a3.300 3.300 0 0 1 0 6.600 H9.500" fill="none" stroke="#6a6a6a" stroke-width="2"/><path d="M4.800 5.500 H11.200" stroke="#6a6a6a" stroke-width="1.600"/></g>
<text x="733.500" y="595.500" font-family="Liberation Sans,sans-serif" font-style="italic" font-weight="bold" font-size="13" fill="#222" letter-spacing="-0.500">fx</text><path d="M746.500 596 h3.600 l-1.800 2.200 Z" fill="#222"/>
<rect x="760.500" y="586.500" width="12" height="10" fill="#555" stroke="#222" stroke-width="1"/><rect x="764" y="589" width="5" height="5" fill="#e0e0e0"/>
<circle cx="792.500" cy="590.500" r="4.800" fill="#e4e4e4" stroke="#222" stroke-width="1.200"/><path d="M789.100 593.900 A4.800 4.800 0 0 1 795.900 587.100 Z" fill="#222"/><path d="M800 596 h3.600 l-1.800 2.200 Z" fill="#222"/>
<path d="M814.500 586.500 H819 L820.500 588.500 H826 V596 H814.500 Z" fill="#8f8f8f" stroke="#2a2a2a" stroke-width="1.200"/>
<path d="M841.500 586.500 H851.500 V596.500 H845 L841.500 593 Z" fill="#8f8f8f" stroke="#2a2a2a" stroke-width="1.200"/><path d="M841.500 593 H845 V596.500" fill="#ccc" stroke="#2a2a2a" stroke-width="1"/>
<path d="M869.500 589 H877.500 V596.500 H869.500 Z" fill="#3a3a3a" stroke="#222" stroke-width="1"/><path d="M868 587.500 H879 M871.500 586 H875.500" stroke="#222" stroke-width="1.600"/><path d="M871.500 590 V595.500 M873.500 590 V595.500 M875.500 590 V595.500" stroke="#aaa" stroke-width="0.800"/>
</svg>

</body>
</html>
